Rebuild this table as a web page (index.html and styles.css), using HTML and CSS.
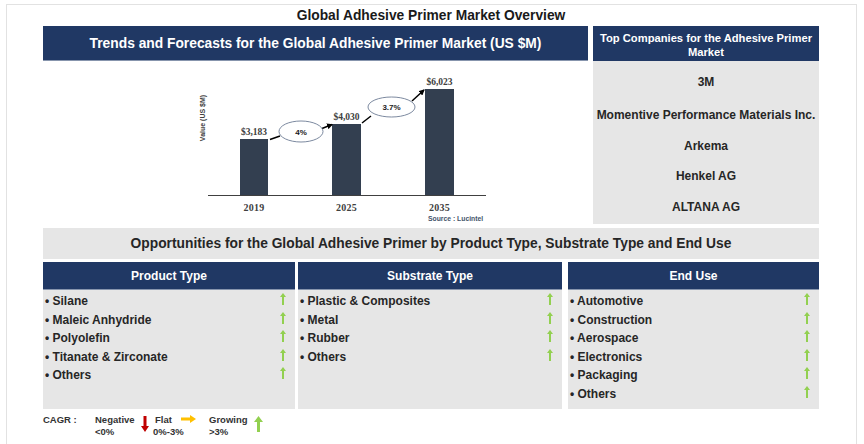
FILE: index.html
```html
<!DOCTYPE html>
<html>
<head>
<meta charset="utf-8">
<link rel="stylesheet" href="styles.css">
</head>
<body>
<div class="frame">
  <div class="content">
    <div class="title">Global Adhesive Primer Market Overview</div>
    <div class="top">
      <div class="trend">
        <div class="trend-head">Trends and Forecasts for the Global Adhesive Primer Market (US $M)</div>
        <div class="chart">
          <svg class="chart-svg" width="545" height="163" viewBox="43 61 545 163">
            <defs>
              <marker id="ah" markerWidth="6" markerHeight="6" refX="5" refY="3" orient="auto" markerUnits="userSpaceOnUse">
                <path d="M0,0 L6,3 L0,6 Z" fill="#000"/>
              </marker>
            </defs>
            <text class="ylab" x="203" y="118" transform="rotate(-90 203 118)" text-anchor="middle" dominant-baseline="middle">Value (US $M)</text>
            <rect x="240" y="139" width="28" height="56" fill="#333f50"/>
            <rect x="332" y="124" width="29" height="71" fill="#333f50"/>
            <rect x="425" y="89" width="29" height="106" fill="#333f50"/>
            <line x1="208" y1="195.5" x2="486" y2="195.5" stroke="#404040" stroke-width="1"/>
            <text class="val" x="254" y="135" text-anchor="middle">$3,183</text>
            <text class="val" x="346.5" y="120" text-anchor="middle">$4,030</text>
            <text class="val" x="439.5" y="85" text-anchor="middle">$6,023</text>
            <text class="yr" x="254" y="211" text-anchor="middle">2019</text>
            <text class="yr" x="346.5" y="211" text-anchor="middle">2025</text>
            <text class="yr" x="439.5" y="211" text-anchor="middle">2035</text>
            <text class="src" x="428" y="220.5">Source : Lucintel</text>
            <line x1="270" y1="139.5" x2="280" y2="136" stroke="#000" stroke-width="1.5"/>
            <line x1="322" y1="128.5" x2="332" y2="124.5" stroke="#000" stroke-width="1.5" marker-end="url(#ah)"/>
            <line x1="362" y1="123" x2="371" y2="116" stroke="#000" stroke-width="1.5"/>
            <line x1="412" y1="101" x2="424" y2="90" stroke="#000" stroke-width="1.5" marker-end="url(#ah)"/>
            <ellipse cx="301" cy="131.5" rx="22" ry="10.5" fill="#fff" stroke="#5b6b86" stroke-width="0.8"/>
            <ellipse cx="391.5" cy="107" rx="23.5" ry="10" fill="#fff" stroke="#5b6b86" stroke-width="0.8"/>
            <text class="pct" x="301" y="134.5" text-anchor="middle">4%</text>
            <text class="pct" x="391.5" y="110" text-anchor="middle">3.7%</text>
          </svg>
        </div>
      </div>
      <div class="companies">
        <div class="comp-head"><span class="comp-head-text">Top Companies for the Adhesive Primer<br>Market</span></div>
        <div class="comp-body">
          <div class="comp comp-first">3M</div>
          <div class="comp">Momentive Performance Materials Inc.</div>
          <div class="comp">Arkema</div>
          <div class="comp">Henkel AG</div>
          <div class="comp">ALTANA AG</div>
        </div>
      </div>
    </div>
    <div class="opp">Opportunities for the Global Adhesive Primer by Product Type, Substrate Type and End Use</div>
    <div class="cols">
      <div class="col col-product">
        <div class="col-head">Product Type</div>
        <div class="col-body">
          <div class="item"><span>• Silane</span><svg class="up" width="6" height="12" viewBox="0 0 6 12"><polygon points="3,0 6,4 4,4 4,12 2,12 2,4 0,4"/></svg></div>
          <div class="item"><span>• Maleic Anhydride</span><svg class="up" width="6" height="12" viewBox="0 0 6 12"><polygon points="3,0 6,4 4,4 4,12 2,12 2,4 0,4"/></svg></div>
          <div class="item"><span>• Polyolefin</span><svg class="up" width="6" height="12" viewBox="0 0 6 12"><polygon points="3,0 6,4 4,4 4,12 2,12 2,4 0,4"/></svg></div>
          <div class="item"><span>• Titanate &amp; Zirconate</span><svg class="up" width="6" height="12" viewBox="0 0 6 12"><polygon points="3,0 6,4 4,4 4,12 2,12 2,4 0,4"/></svg></div>
          <div class="item"><span>• Others</span><svg class="up" width="6" height="12" viewBox="0 0 6 12"><polygon points="3,0 6,4 4,4 4,12 2,12 2,4 0,4"/></svg></div>
        </div>
      </div>
      <div class="col col-substrate">
        <div class="col-head">Substrate Type</div>
        <div class="col-body">
          <div class="item"><span>• Plastic &amp; Composites</span><svg class="up" width="6" height="12" viewBox="0 0 6 12"><polygon points="3,0 6,4 4,4 4,12 2,12 2,4 0,4"/></svg></div>
          <div class="item"><span>• Metal</span><svg class="up" width="6" height="12" viewBox="0 0 6 12"><polygon points="3,0 6,4 4,4 4,12 2,12 2,4 0,4"/></svg></div>
          <div class="item"><span>• Rubber</span><svg class="up" width="6" height="12" viewBox="0 0 6 12"><polygon points="3,0 6,4 4,4 4,12 2,12 2,4 0,4"/></svg></div>
          <div class="item"><span>• Others</span><svg class="up" width="6" height="12" viewBox="0 0 6 12"><polygon points="3,0 6,4 4,4 4,12 2,12 2,4 0,4"/></svg></div>
        </div>
      </div>
      <div class="col col-end">
        <div class="col-head">End Use</div>
        <div class="col-body">
          <div class="item"><span>• Automotive</span><svg class="up" width="6" height="12" viewBox="0 0 6 12"><polygon points="3,0 6,4 4,4 4,12 2,12 2,4 0,4"/></svg></div>
          <div class="item"><span>• Construction</span><svg class="up" width="6" height="12" viewBox="0 0 6 12"><polygon points="3,0 6,4 4,4 4,12 2,12 2,4 0,4"/></svg></div>
          <div class="item"><span>• Aerospace</span><svg class="up" width="6" height="12" viewBox="0 0 6 12"><polygon points="3,0 6,4 4,4 4,12 2,12 2,4 0,4"/></svg></div>
          <div class="item"><span>• Electronics</span><svg class="up" width="6" height="12" viewBox="0 0 6 12"><polygon points="3,0 6,4 4,4 4,12 2,12 2,4 0,4"/></svg></div>
          <div class="item"><span>• Packaging</span><svg class="up" width="6" height="12" viewBox="0 0 6 12"><polygon points="3,0 6,4 4,4 4,12 2,12 2,4 0,4"/></svg></div>
          <div class="item"><span>• Others</span><svg class="up" width="6" height="12" viewBox="0 0 6 12"><polygon points="3,0 6,4 4,4 4,12 2,12 2,4 0,4"/></svg></div>
        </div>
      </div>
    </div>
    <div class="legend">
      <div class="lg-cagr">CAGR :</div>
      <div class="lg-neg">Negative<br>&lt;0%</div>
      <svg class="lg-down" width="8" height="16" viewBox="0 0 8 16"><polygon points="2.5,0 5.5,0 5.5,10 8,10 4,16 0,10 2.5,10" fill="#c00000"/></svg>
      <div class="lg-flat"><span class="lg-flat-top">Flat</span><br>0%-3%</div>
      <svg class="lg-right" width="15" height="8" viewBox="0 0 15 8"><polygon points="0,2.5 9,2.5 9,0 15,4 9,8 9,5.5 0,5.5" fill="#ffc000"/></svg>
      <div class="lg-grow">Growing<br>&gt;3%</div>
      <svg class="lg-up" width="9" height="16" viewBox="0 0 9 16"><polygon points="4.5,0 9,6 6,6 6,16 3,16 3,6 0,6" fill="#92d050"/></svg>
    </div>
  </div>
</div>
</body>
</html>
```

FILE: styles.css
```css
body {
  margin: 0;
  background: #fff;
  font-family: "Liberation Sans", Arial, sans-serif;
  color: #262626;
}

.frame {
  margin: 4px 0 0 6px;
  width: 851px;
  height: 460px;
  box-sizing: border-box;
  border: 1px solid #e2e2e2;
  padding-left: 36px;
}

.content {
  width: 776px;
}

.title {
  height: 21px;
  line-height: 21px;
  text-align: center;
  font-size: 13.8px;
  font-weight: bold;
  color: #1a1a1a;
}

.top {
  display: flex;
  gap: 5px;
  height: 198px;
}

.trend {
  width: 545px;
  display: flex;
  flex-direction: column;
}

.trend-head {
  height: 35px;
  background: #203864;
  color: #fff;
  font-size: 13.8px;
  font-weight: bold;
  display: flex;
  align-items: center;
  justify-content: center;
  border-bottom: 1px solid #8795ad;
  box-sizing: border-box;
}

.chart {
  flex: 1;
  background: #fff;
}

.chart-svg {
  display: block;
}

.ylab {
  font-family: "Liberation Sans", Arial, sans-serif;
  font-size: 7px;
  font-weight: bold;
  fill: #404040;
}

.val {
  font-family: "Liberation Serif", "Times New Roman", serif;
  font-size: 9.5px;
  font-weight: bold;
  fill: #404040;
}

.yr {
  font-family: "Liberation Serif", "Times New Roman", serif;
  font-size: 10px;
  font-weight: bold;
  fill: #404040;
  letter-spacing: 0.3px;
}

.src {
  font-family: "Liberation Sans", Arial, sans-serif;
  font-size: 6.8px;
  font-weight: bold;
  fill: #44546a;
}

.pct {
  font-family: "Liberation Sans", Arial, sans-serif;
  font-size: 8px;
  font-weight: bold;
  fill: #1a1a1a;
}

.companies {
  width: 226px;
  display: flex;
  flex-direction: column;
  background: #e6e6e6;
}

.comp-head {
  height: 35px;
  background: #203864;
  color: #fff;
  display: flex;
  align-items: center;
  justify-content: center;
}

.comp-head-text {
  font-size: 11.2px;
  line-height: 14px;
  font-weight: bold;
  text-align: center;
  white-space: nowrap;
  padding-top: 2px;
}

.comp-body {
  padding-top: 3px;
}

.comp {
  height: 30.5px;
  display: flex;
  align-items: center;
  justify-content: center;
  font-size: 12px;
  font-weight: bold;
  color: #262626;
  white-space: nowrap;
}

.comp-first {
  height: 36px;
}

.opp {
  margin-top: 4px;
  height: 31px;
  background: #e6e6e6;
  display: flex;
  align-items: center;
  justify-content: center;
  font-size: 13.8px;
  font-weight: bold;
  color: #262626;
}

.cols {
  margin-top: 3px;
  display: flex;
  gap: 3px;
  height: 147px;
}

.col {
  display: flex;
  flex-direction: column;
}

.col-product {
  width: 252px;
}

.col-substrate {
  width: 264px;
}

.col-end {
  width: 251px;
  margin-left: 3px;
}

.col-head {
  height: 28px;
  background: #203864;
  color: #fff;
  font-size: 12px;
  font-weight: bold;
  display: flex;
  align-items: center;
  justify-content: center;
  border-bottom: 1px solid #8795ad;
  box-sizing: border-box;
}

.col-body {
  flex: 1;
  background: #e6e6e6;
  padding: 2px 9px 0 2px;
}

.item {
  height: 18.5px;
  display: flex;
  align-items: center;
  justify-content: space-between;
  font-size: 12px;
  font-weight: bold;
  color: #262626;
}

.up {
  fill: #92d050;
  margin-top: -4px;
}

.legend {
  display: flex;
  align-items: flex-start;
  margin-top: 5px;
  font-size: 9.5px;
  line-height: 12px;
  font-weight: bold;
  color: #333;
}

.lg-cagr {
  width: 52px;
}

.lg-neg {
  width: 46px;
}

.lg-down {
  margin-top: 2px;
  margin-right: 4px;
}

.lg-flat {
  width: 28px;
}

.lg-flat-top {
  padding-left: 2px;
}

.lg-right {
  margin-top: 1px;
  margin-right: 13px;
}

.lg-grow {
  width: 45px;
}

.lg-up {
  margin-top: 2px;
}
```
